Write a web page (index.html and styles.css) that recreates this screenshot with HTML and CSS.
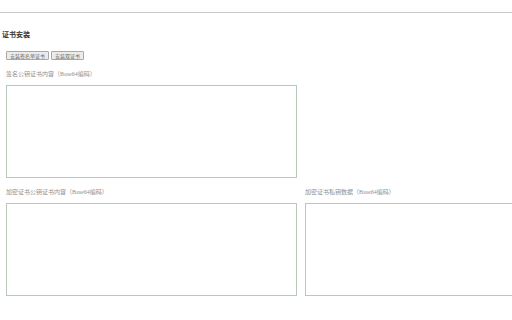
FILE: index.html
```html
<!DOCTYPE html>
<html>
<head>
<meta charset="utf-8">
<link rel="stylesheet" href="styles.css">
</head>
<body>
<div class="page">
  <hr class="rule">
  <h3 class="title">证书安装</h3>
  <div class="actions">
    <button class="btn">安装签名单证书</button>
    <button class="btn">安装双证书</button>
  </div>
  <div class="grid">
    <div class="field">
      <label class="label">签名公钥证书内容（Base64编码）</label>
      <textarea class="box"></textarea>
    </div>
    <div class="field empty"></div>
    <div class="field">
      <label class="label">加密证书公钥证书内容（Base64编码）</label>
      <textarea class="box"></textarea>
    </div>
    <div class="field">
      <label class="label">加密证书私钥数据（Base64编码）</label>
      <textarea class="box"></textarea>
    </div>
  </div>
</div>
</body>
</html>
```

FILE: styles.css
```css
html, body {
  margin: 0;
  padding: 0;
  background: #fff;
  overflow: hidden;
}
.page {
  width: 512px;
  height: 320px;
  overflow: hidden;
  font-family: "Liberation Serif", "Noto Sans CJK SC", serif;
}
.rule {
  margin: 12px 0 0 0;
  border: 0;
  border-top: 1px solid #c8c8c8;
  height: 0;
}
.title {
  margin: 18px 0 0 2px;
  font-size: 7px;
  line-height: 9px;
  font-weight: bold;
  color: #333;
}
.actions {
  display: flex;
  gap: 2px;
  margin: 11px 0 0 6px;
}
.btn {
  font-family: "Noto Sans CJK SC", sans-serif;
  font-size: 5px;
  line-height: 6px;
  height: 9px;
  padding: 0 3px;
  margin: 0;
  border: 1px solid #a8a8a8;
  border-radius: 1px;
  background: #ececec;
  color: #666;
}
.grid {
  display: grid;
  grid-template-columns: 291px 291px;
  column-gap: 8px;
  row-gap: 10px;
  margin: 10px 0 0 6px;
}
.field {
  display: flex;
  flex-direction: column;
}
.label {
  font-family: "Liberation Serif", "Noto Sans CJK SC", serif;
  font-size: 6px;
  line-height: 8px;
  color: #8f8f8f;
  height: 8px;
  margin-bottom: 7px;
}
.box {
  box-sizing: border-box;
  width: 291px;
  height: 93px;
  margin: 0;
  padding: 0;
  border: 1px solid #b9c9b9;
  resize: none;
  background: #fff;
}
```
